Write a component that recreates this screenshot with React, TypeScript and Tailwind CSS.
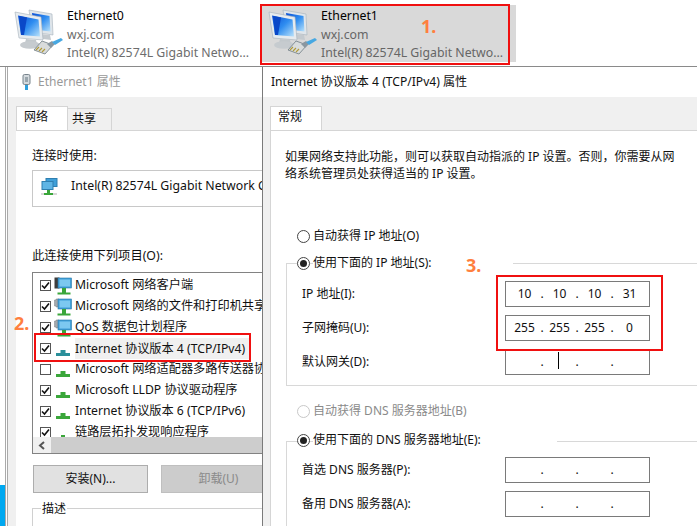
import React from 'react';

const MonitorPair = () => (
  <svg width="50" height="48" viewBox="0 0 50 48" className="shrink-0">
    <defs>
      <linearGradient id="scr" x1="0" y1="0" x2="1" y2="1">
        <stop offset="0" stopColor="#0a4fd6" />
        <stop offset="0.5" stopColor="#2f8df0" />
        <stop offset="1" stopColor="#b9e2fb" />
      </linearGradient>
    </defs>
    {/* back monitor */}
    <path d="M15 2 L38 6 L39 27 L18 24 Z" fill="#dfe5ea" stroke="#a5b0ba" strokeWidth="0.6" />
    <path d="M18 5 L35.5 8 L36.5 23.5 L20 21.5 Z" fill="url(#scr)" />
    <path d="M27 26 L36 27 L37 32 L29 31 Z" fill="#c4cacf" />
    {/* front monitor */}
    <path d="M1 4 L27 9 L29 32 L5 30 Z" fill="#e6ebef" stroke="#a5b0ba" strokeWidth="0.6" />
    <path d="M4 7.5 L24.5 11.5 L26 28.5 L7 27 Z" fill="url(#scr)" />
    <path d="M5 8 L13 9.5 L10 27 L7 27 Z" fill="#0a48c8" />
    <path d="M12 31 L22 32 L23 36 L11 35 Z" fill="#c2c8cc" />
    <ellipse cx="16" cy="37" rx="10" ry="3.8" fill="#c6cbcf" />
    {/* plug */}
    <path d="M20 42 L28 33 L39 37 L31 46 Z" fill="#d9dcdc" stroke="#6f7c84" strokeWidth="0.8" />
    <path d="M22 42 L25 39 M25 43 L28 40 M28 44 L31 41" stroke="#b09a3a" strokeWidth="1.1" />
    <path d="M33 36 L38 33 L41 36 L37 40 Z" fill="#8a97a0" />
    <path d="M38 34 L47 30 L49 32 L41 37 Z" fill="#47a8e2" />
  </svg>
);

const Tray = ({ color = '#3aa63a', small = false }: { color?: string; small?: boolean }) => (
  <svg width="16" height="16" viewBox="0 0 16 16" className="shrink-0">
    {!small && <path d="M1 15 V12 H5.5 V9 H10.5 V12 H15 V15 Z" fill={color} />}
    {small && <rect x="6" y="10" width="4" height="4" fill={color} />}
  </svg>
);

const PcIcon = ({ gear = false }: { gear?: boolean }) => (
  <svg width="18" height="18" viewBox="0 0 18 18" className="shrink-0">
    {gear ? (
      <path
        d="M2 1 H5 V2 H7 V8 H5 V9 H2 V8 H0.5 V2 H2 Z"
        fill="#a4a9ad"
        stroke="#7d8387"
        strokeWidth="0.5"
      />
    ) : (
      <rect x="0.5" y="0.5" width="5" height="11" fill="#3d3d3d" />
    )}
    <rect x="4" y="1" width="13.5" height="10" fill="#3f9fd8" stroke="#2878a8" strokeWidth="0.6" />
    <rect x="5.5" y="2.5" width="10.5" height="7" fill="#7cc8f0" />
    <path d="M3.5 17.5 V15.5 H8 V11 H12 V15.5 H16.5 V17.5 Z" fill="#3aa63a" />
  </svg>
);

const Check = ({ on = true }: { on?: boolean }) => (
  <span className="w-[11px] h-[11px] border border-[#555] bg-white flex items-center justify-center shrink-0">
    {on && (
      <svg width="9" height="9" viewBox="0 0 9 9">
        <path d="M1 4.5 L3.5 7 L8 1.5" fill="none" stroke="#111" strokeWidth="1.6" />
      </svg>
    )}
  </span>
);

const Radio = ({ on = false, disabled = false }: { on?: boolean; disabled?: boolean }) => (
  <span
    className={`w-[13px] h-[13px] rounded-full border bg-white flex items-center justify-center shrink-0 ${
      disabled ? 'border-[#c8c8c8]' : 'border-[#444]'
    }`}
  >
    {on && <span className="w-[7px] h-[7px] rounded-full bg-[#222]" />}
  </span>
);

const Adapter = ({ name, selected }: { name: string; selected?: boolean }) => (
  <div className={`w-[254px] h-[57px] flex items-start pl-[6px] pt-[3px] gap-[3px] ${selected ? 'bg-[#d9d9d9]' : ''}`}>
    <MonitorPair />
    <div className="flex flex-col leading-[18.5px] -mt-[1px] whitespace-nowrap text-[12.3px]">
      <span className="text-black">{name}</span>
      <span className={selected ? 'text-[#666]' : 'text-[#6d6d6d]'}>wxj.com</span>
      <span className={selected ? 'text-[#666]' : 'text-[#6d6d6d]'}>Intel(R) 82574L Gigabit Netwo...</span>
    </div>
  </div>
);

const items = [
  { label: 'Microsoft 网络客户端', on: true, icon: <PcIcon /> },
  { label: 'Microsoft 网络的文件和打印机共享', on: true, icon: <PcIcon gear /> },
  { label: 'QoS 数据包计划程序', on: true, icon: <PcIcon gear /> },
  { label: 'Internet 协议版本 4 (TCP/IPv4)', on: true, icon: <Tray color="#2a8f9a" />, selected: true },
  { label: 'Microsoft 网络适配器多路传送器协议', on: false, icon: <Tray /> },
  { label: 'Microsoft LLDP 协议驱动程序', on: true, icon: <Tray /> },
  { label: 'Internet 协议版本 6 (TCP/IPv6)', on: true, icon: <Tray /> },
  { label: '链路层拓扑发现响应程序', on: true, icon: <Tray small /> },
];

const IpField = ({ parts = ['', '', '', ''], caret = false }: { parts?: string[]; caret?: boolean }) => (
  <div className="w-[145px] h-[26px] border border-[#7a7a7a] bg-white flex items-center pl-[2px] shrink-0 whitespace-nowrap">
    {parts.map((p, i) => (
      <React.Fragment key={i}>
        <span className="w-[33px] text-center">{p}</span>
        {i < 3 && (
          <span className="w-[2px] flex justify-center relative">
            .
            {caret && i === 0 && <span className="absolute left-[17px] top-[-1px] w-px h-[17px] bg-black" />}
          </span>
        )}
      </React.Fragment>
    ))}
  </div>
);

const FieldRow = ({ label, children }: { label: string; children: React.ReactNode }) => (
  <div className="flex items-center justify-between w-[348px]">
    <span>{label}</span>
    {children}
  </div>
);

export default function App() {
  return (
    <div className="relative w-[697px] h-[526px] overflow-hidden bg-white flex flex-col text-[12px] text-[#111] font-['Noto_Sans','Noto_Sans_CJK_SC',sans-serif]">
      {/* adapter list */}
      <div className="h-[67px] flex pl-[8px] pt-[5px] border-b border-[#8a8a8a] shrink-0">
        <Adapter name="Ethernet0" />
        <Adapter name="Ethernet1" selected />
      </div>

      <div className="flex flex-1 min-h-0">
        {/* desktop strip */}
        <div className="w-[6px] flex flex-col justify-end shrink-0 border-r border-[#aaa]">
          <div className="h-[41px] bg-[#00a8f0]" />
        </div>

        {/* Ethernet1 dialog */}
        <div className="w-[255px] ml-[1px] flex flex-col bg-[#f0f0f0] border-l border-[#aaa] shrink-0 overflow-hidden">
          <div className="h-[30px] bg-white flex items-center pl-[14px] gap-[7px] text-[#999] shrink-0">
            <svg width="9" height="16" viewBox="0 0 9 16">
              <rect x="1" y="0.5" width="7" height="10" rx="1.5" fill="#d4dade" stroke="#77838b" />
              <rect x="3" y="3" width="3" height="5" fill="#9aa6ad" />
              <rect x="3" y="11" width="3" height="5" fill="#2f9fdc" />
            </svg>
            Ethernet1 属性
          </div>
          <div className="flex items-end h-[33px] pl-[8px] shrink-0">
            <div className="w-[52px] h-[24px] bg-white border border-b-0 border-[#d5d5d5] pl-[7px] leading-[20px]">网络</div>
            <div className="w-[44px] h-[22px] bg-[#f0f0f0] border border-b-0 border-l-0 border-[#d5d5d5] pl-[4px] leading-[20px]">共享</div>
          </div>
          <div className="flex-1 ml-[8px] bg-white border-t border-[#d5d5d5] pl-[16px] pt-[16px] min-h-0 w-[300px]">
            <div className="leading-[17px] text-[12.3px]">连接时使用:</div>
            <div className="w-[240px] h-[37px] mt-[6px] pb-[4px] border border-[#c8c8c8] flex items-center pl-[8px] gap-[13px] whitespace-nowrap overflow-hidden text-[12.3px]">
              <svg width="17" height="18" viewBox="0 0 17 18" className="shrink-0">
                <rect x="5" y="0.5" width="11" height="8" fill="#3f9fd8" stroke="#2f7fb0" />
                <rect x="1" y="3.5" width="11" height="8" fill="#5fb5e5" stroke="#2f7fb0" />
                <rect x="0" y="15" width="16" height="2" fill="#d8d8d8" />
                <path d="M3 17 V15 H6 V12 H9 V15 H12 V17 Z" fill="#3aa63a" />
              </svg>
              Intel(R) 82574L Gigabit Network Connection
            </div>
            <div className="mt-[40px] leading-[17px] text-[12.3px]">此连接使用下列项目(O):</div>
            <div className="w-[240px] h-[182px] mt-[8px] border border-[#828282] flex flex-col overflow-hidden">
              <div className="h-[164px] pt-[2px] overflow-hidden shrink-0">
                {items.map((it) => (
                  <div key={it.label} className="h-[21px] flex items-center pl-[7px] whitespace-nowrap text-[12.2px]">
                    <Check on={it.on} />
                    <span className="w-[24px] flex justify-center shrink-0">{it.icon}</span>
                    <span className={it.selected ? 'bg-[#f0f0f0] pr-[4px] leading-[21px]' : ''}>{it.label}</span>
                  </div>
                ))}
              </div>
              <div className="h-[16px] bg-[#cdcdcd] shrink-0 flex">
                <div className="w-[18px] bg-[#f0f0f0] flex items-center justify-center">
                  <svg width="8" height="9" viewBox="0 0 8 9">
                    <path d="M6 1 L2 4.5 L6 8" fill="none" stroke="#555" strokeWidth="2" />
                  </svg>
                </div>
              </div>
            </div>
            <div className="flex mt-[11px]">
              <div className="w-[115px] h-[28px] ml-px bg-[#e1e1e1] border border-[#adadad] flex items-center justify-center">安装(N)...</div>
              <div className="w-[115px] h-[28px] ml-[13px] bg-[#cccccc] border border-[#bfbfbf] flex items-center justify-center text-[#8a8a8a]">卸载(U)</div>
            </div>
            <div className="mt-[15px] w-[240px] h-[40px] border-l border-t border-[#d0d0d0]">
              <span className="relative -top-[9px] left-[8px] bg-white px-px leading-[17px] inline-block">描述</span>
            </div>
          </div>
        </div>

        {/* IPv4 dialog */}
        <div className="flex-1 flex flex-col bg-[#f0f0f0] border-l border-[#7a7a7a] overflow-hidden">
          <div className="h-[30px] bg-white flex items-center pl-[8px] shrink-0 whitespace-nowrap text-[12.1px]">Internet 协议版本 4 (TCP/IPv4) 属性</div>
          <div className="flex items-end h-[33px] pl-[7px] shrink-0">
            <div className="w-[52px] h-[24px] bg-white border border-b-0 border-[#d5d5d5] pl-[7px] leading-[20px]">常规</div>
          </div>
          <div className="flex-1 ml-[7px] bg-white border-t border-l border-[#d5d5d5] pl-[14px] pt-[18px] min-h-0">
            <div className="leading-[16.5px] whitespace-nowrap">
              <div>如果网络支持此功能，则可以获取自动指派的 IP 设置。否则，你需要从网</div>
              <div>络系统管理员处获得适当的 IP 设置。</div>
            </div>
            <div className="flex items-center gap-[3px] pl-[12px] mt-[46px] h-[16px]">
              <Radio />
              <span>自动获得 IP 地址(O)</span>
            </div>
            <div className="ml-px h-[123px] border-l border-t border-b border-[#d8d8d8] mt-[19px]">
              <div className="flex items-center gap-[3px] pl-[10px] h-[16px] -mt-[9px]">
                <Radio on />
                <span className="bg-white pr-[4px] w-[200px]">使用下面的 IP 地址(S):</span>
              </div>
              <div className="pl-[15px] mt-[10px] flex flex-col gap-[8px]">
                <FieldRow label="IP 地址(I):">
                  <IpField parts={['10', '10', '10', '31']} />
                </FieldRow>
                <FieldRow label="子网掩码(U):">
                  <IpField parts={['255', '255', '255', '0']} />
                </FieldRow>
                <FieldRow label="默认网关(D):">
                  <IpField caret />
                </FieldRow>
              </div>
            </div>
            <div className="flex items-center gap-[3px] pl-[12px] mt-[17px] h-[16px] text-[#8a8a8a]">
              <Radio disabled />
              <span>自动获得 DNS 服务器地址(B)</span>
            </div>
            <div className="ml-px mt-[22px] border-l border-t border-[#d8d8d8] h-[90px]">
              <div className="flex items-center gap-[3px] pl-[10px] h-[16px] -mt-[10px]">
                <Radio on />
                <span className="bg-white pr-[4px] w-[244px]">使用下面的 DNS 服务器地址(E):</span>
              </div>
              <div className="pl-[15px] mt-[9px] flex flex-col gap-[8px]">
                <FieldRow label="首选 DNS 服务器(P):">
                  <IpField />
                </FieldRow>
                <FieldRow label="备用 DNS 服务器(A):">
                  <IpField />
                </FieldRow>
              </div>
            </div>
          </div>
        </div>
      </div>

      {/* annotations */}
      <div className="absolute left-[260px] top-[4px] w-[250px] h-[61px] border-2 border-[#f01010]" />
      <div className="absolute left-[34px] top-[333px] w-[217px] h-[29px] border-2 border-[#f01010]" />
      <div className="absolute left-[496px] top-[275px] w-[167px] h-[76px] border-2 border-[#f01010]" />
      <span className="absolute left-[421px] top-[15px] text-[18px] leading-[22px] font-bold text-[#ff7f3f]">1.</span>
      <span className="absolute left-[14px] top-[312px] text-[18px] leading-[22px] font-bold text-[#ff7f3f]">2.</span>
      <span className="absolute left-[466px] top-[254px] text-[18px] leading-[22px] font-bold text-[#ff7f3f]">3.</span>
    </div>
  );
}
